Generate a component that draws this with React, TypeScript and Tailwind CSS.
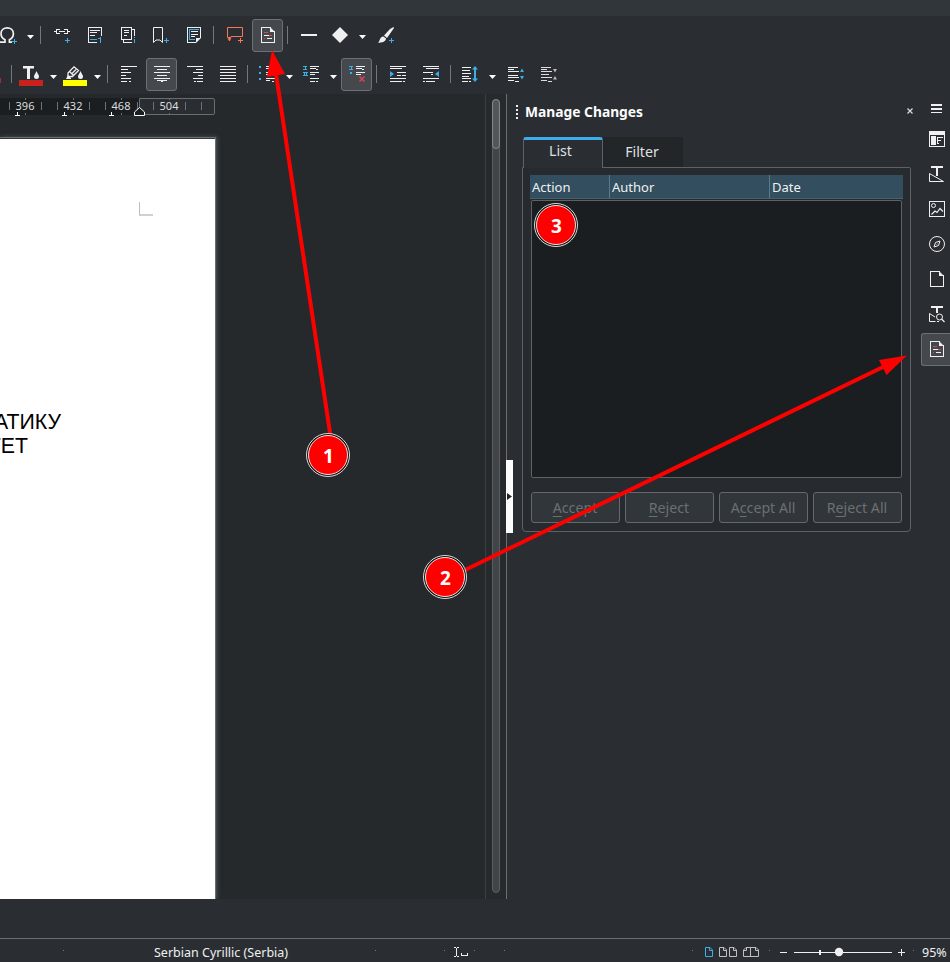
import React from "react";

type IconProps = { w?: number; h?: number; className?: string; children: React.ReactNode };

function Icon({ w = 16, h = 16, className = "", children }: IconProps) {
  return (
    <svg width={w} height={h} viewBox={`0 0 ${w} ${h}`} fill="none" className={"block shrink-0 overflow-visible " + className}>
      {children}
    </svg>
  );
}

const FG = "#eff0f1";
const BLUE = "#3daee9";
const RED = "#da4453";

function Px({ d, c = FG }: { d: string; c?: string }) {
  return <path d={d} stroke={c} shapeRendering="crispEdges" />;
}

const Sep = ({ className = "" }: { className?: string }) => (
  <div className={"h-[18px] w-px shrink-0 bg-[#75787b] " + className} />
);

const Caret = ({ className = "" }: { className?: string }) => (
  <Icon w={7} h={4} className={className}>
    <path d="M0 0H7L3.5 4Z" fill="#fcfcfc" />
  </Icon>
);

const Active = ({ className = "", children }: { className?: string; children: React.ReactNode }) => (
  <div className={"mt-px flex h-[33px] w-[31px] shrink-0 items-start rounded-[3px] border border-[#6e7174] bg-[#45484c] pt-[7px] " + className}>
    {children}
  </div>
);

const ChangesIcon = () => (
  <Icon w={14}>
    <Px d="M0 .5H10M.5 0V16M0 15.5H14M13.5 4V16" />
    <path d="M9 0L14 5H9Z" fill={FG} />
    <Px c={RED} d="M3 5.5H7M8 8.5H11M3 11.5H4" />
    <Px d="M3 8.5H8M6 11.5H11" />
  </Icon>
);

function InsertBar() {
  return (
    <div className="mb-px flex h-[38px] items-center overflow-hidden">
      <Icon w={17}>
        <path d="M-1 15.2H5V12.8C2.3 11.3 1 9.3 1 6.7C1 3.2 3.8.9 7.2.9S13.4 3.2 13.4 6.7C13.4 9.3 12.1 11.3 9.4 12.8V15.2H12" stroke={FG} strokeWidth="1.7" />
        <Px c={BLUE} d="M12 14.5H17M14.5 12V17" />
      </Icon>
      <Caret className="ml-[10px] mt-[4px]" />
      <Sep className="ml-[6px]" />
      <Icon className="ml-[13px]">
        <Px d="M0 4.5H3M2.5 2V7M2 2.5H6M2 6.5H6M6.5 4V5M5 4.5H11M10 2.5H14M10 6.5H14M13.5 2V7M13 4.5H16" />
        <Px c={BLUE} d="M11 13.5H16M13.5 11V16" />
      </Icon>
      <Icon w={14} className="ml-[18px]">
        <Px d="M13.5 9V0M14 .5H.5V15.5H9M2 3.5H12M2 5.5H9M2 8.5H7" />
        <Px c={BLUE} d="M2 12.5H9M10 11.5H12M12.5 10V16" />
      </Icon>
      <Icon className="ml-[19px]">
        <Px d="M.5 .5H10.5V12.5H.5ZM2.5 12V15.5H11M11 2.5H13.5V9M3 3.5H8M3 5.5H8M3 8.5H6" />
        <Px c={BLUE} d="M13.5 10V11M13.5 12V16" />
      </Icon>
      <Icon className="ml-[16px]">
        <path d="M.5 15.5V.5H9.5V15.5L7 13H3L.5 15.5Z" stroke={FG} />
        <Px c={BLUE} d="M11 13.5H16M13.5 11V16" />
      </Icon>
      <Icon w={14} className="ml-[18px]">
        <Px d="M9 15.5H.5V.5H13.5V11M4 4.5H11M4 7.5H11M4 9.5H8" />
        <Px c={BLUE} d="M2.5 13V2.5H12M2.5 12.5H8" />
        <path d="M9 16V11H14Z" fill={FG} />
      </Icon>
      <Sep className="ml-[12px]" />
      <Icon className="ml-[13px]">
        <path d="M.5 .5H15.5V9.5H4L2.5 14L.5 10Z" stroke="#f67750" />
        <path d="M1 10H4L2.5 14Z" fill="#f67750" />
        <Px c="#f67750" d="M11 13.5H16M13.5 11V16" />
      </Icon>
      <Active className="ml-[9px] pl-[8px]"><ChangesIcon /></Active>
      <Sep className="ml-[4px]" />
      <div className="ml-[13px] h-[2px] w-4 shrink-0 bg-[#eff0f1]" />
      <Icon className="ml-[15px]"><path d="M8 0L16 8L8 16L0 8Z" fill={FG} /></Icon>
      <Caret className="ml-[11px] mt-[4px]" />
      <Icon className="ml-[12px]">
        <path d="M15.5 0L16 1L9 11L6 8.5L12 2Z M5.5 9.5L8 11.5C8 15 3.5 15.5 0 16C2 14.5 1 10 5.5 9.5Z" fill={FG} />
        <Px c={BLUE} d="M11 13.5H16M13.5 11V16" />
      </Icon>
    </div>
  );
}

function FormatBar() {
  return (
    <div className="mb-px flex h-[38px] items-center overflow-hidden">
      <div className="mb-[10px] h-[5px] w-px shrink-0 self-end bg-[#a02c35]" />
      <Sep className="ml-[10px]" />
      <Icon w={24} h={20} className="ml-[7px] mt-[4px]">
        <path d="M4 0H15V2.5H11V13H8V2.5H4Z" fill={FG} />
        <path d="M17.5 5C18.5 8 20 8.5 20 10.5A2.5 2.5 0 0 1 15 10.5C15 8.5 16.5 8 17.5 5Z" fill={FG} />
        <path d="M0 14H24V20H0Z" fill="#c9211e" />
      </Icon>
      <Caret className="ml-[7px] mt-[6px]" />
      <Icon w={24} h={20} className="ml-[6px] mt-[4px]">
        <path d="M5 7L11 .8L15.5 4.5L9.5 10.5H5Z M7 6L10.5 9.5M8.5 8L13 3.5" stroke={FG} strokeWidth="1.3" />
        <path d="M3 13L5 9L8 12V13Z" fill={FG} />
        <path d="M17.5 5C18.5 8 20 8.5 20 10.5A2.5 2.5 0 0 1 15 10.5C15 8.5 16.5 8 17.5 5Z" fill={FG} />
        <path d="M0 14H24V20H0Z" fill="#ffff00" />
      </Icon>
      <Caret className="ml-[7px] mt-[6px]" />
      <Sep className="ml-[6px]" />
      <Icon className="ml-[13px]"><Px d="M0 .5H16M0 3.5H7M0 6.5H10M0 9.5H5M0 12.5H10M0 15.5H6M8 15.5H10" /></Icon>
      <Active className="ml-[9px] pl-[7px]">
        <Icon><Px d="M0 .5H16M3 3.5H13M0 6.5H16M3 9.5H13M0 12.5H16M3 14.5H13M7 15.5H9" /></Icon>
      </Active>
      <Icon className="ml-[10px]"><Px d="M0 .5H16M9 3.5H16M6 6.5H16M11 9.5H16M6 12.5H16M7 15.5H9M10 15.5H16" /></Icon>
      <Icon className="ml-[17px]"><Px d="M0 .5H16M0 3.5H16M0 6.5H16M0 9.5H16M0 12.5H16M0 15.5H16" /></Icon>
      <Sep className="ml-[11px]" />
      <Icon className="ml-[11px]">
        <path d="M0 0h2v2h-2zM0 6h2v2h-2zM0 12h2v2h-2z" fill={BLUE} />
        <Px d="M7 .5H16M7 2.5H13M7 6.5H16M7 8.5H12M7 12.5H16M7 14.5H11M13 15.5H15" />
      </Icon>
      <Caret className="ml-[11px] mt-[6px]" />
      <Icon className="ml-[10px]">
        <Px c={BLUE} d="M0 .5H4M2 0V4M0 3.5H4M0 6.5H5M1.5 6V10M3.5 6V10M0 9.5H5" />
        <Px d="M7 .5H16M7 2.5H13M13 3.5H15M7 6.5H16M7 8.5H12M7 12.5H16M7 15.5H12M13 15.5H15" />
      </Icon>
      <Caret className="ml-[11px] mt-[6px]" />
      <Active className="ml-[4px] pl-[7px]">
        <Icon>
          <Px c={BLUE} d="M0 .5H4M2 0V4M0 3.5H4" />
          <path d="M1 6h2v2h-2z" fill={BLUE} />
          <Px d="M7 .5H16M7 2.5H13M13 3.5H15M7 6.5H16M7 8.5H12" />
          <path d="M10.5 10.5L15.5 15.5M15.5 10.5L10.5 15.5" stroke={RED} strokeWidth="1.6" />
        </Icon>
      </Active>
      <Sep className="ml-[4px]" />
      <Icon className="ml-[13px]">
        <Px d="M0 .5H16M0 2.5H12M7 6.5H16M7 9.5H11M12 9.5H16M0 12.5H16M0 15.5H12M13 15.5H15" />
        <path d="M0 5L4 8L0 11Z" fill={BLUE} />
      </Icon>
      <Icon className="ml-[17px]">
        <Px d="M0 .5H16M3 2.5H16M0 6.5H10M8 8.5H10M0 12.5H16M3 15.5H12M0 15.5H2" />
        <path d="M16 5L12 8L16 11Z" fill={BLUE} />
      </Icon>
      <Sep className="ml-[11px]" />
      <Icon className="ml-[11px]">
        <Px d="M0 1.5H9M0 4.5H8M0 7.5H9M0 10.5H7M0 12.5H9M0 15.5H6M7 15.5H9" />
        <path d="M13 0L16 3.5H14V12.5H16L13 16L10 12.5H12V3.5H10Z" fill={BLUE} />
      </Icon>
      <Caret className="ml-[11px] mt-[6px]" />
      <Icon className="ml-[12px]">
        <Px d="M0 1.5H10M0 3.5H6M0 5.5H11M0 9.5H10M0 11.5H11M0 14.5H6M7 15.5H11" />
        <path d="M14 2.5L16 6H12ZM14 13.5L16 10H12Z" fill={BLUE} />
      </Icon>
      <Icon className="ml-[17px]">
        <Px d="M0 1.5H10M0 3.5H6M0 5.5H11M0 8.5H8M0 11.5H11M0 14.5H6M7 15.5H11" c="#dcdddf" />
        <path d="M14 6.5L16 3H12ZM14 10L16 13.5H12Z" fill="#b5b7b9" />
      </Icon>
    </div>
  );
}

function Ruler() {
  return (
    <div className="relative mt-[4px] flex h-[17px] w-[215px]">
      <div className="h-[17px] w-[139px] bg-[#1b1e20]" />
      <div className="h-[17px] w-[76px] rounded-r-[2px] border border-[#6b6e71] bg-[#2a2e32]" />
      <svg className="absolute left-0 top-0 overflow-visible" width="215" height="18" shapeRendering="crispEdges" fill="none">
        <path d="M9.5 4V12M41.5 4V12M57.5 4V12M89.5 4V12M105.5 4V12M137.5 4V12M153.5 4V12M185.5 4V12M201.5 4V12M25.5 0V2M25.5 15V17M73.5 0V2M73.5 15V17M121.5 0V2M121.5 15V17M169.5 0V2M169.5 15V17" stroke="#6f7275" />
        <path d="M15 17.5H20M17.5 14V18M62 17.5H67M64.5 14V18M109 17.5H114M111.5 14V18" stroke="#fcfcfc" />
        <path d="M134.5 17.5V14L139.5 9.5L144.5 14V17.5Z" fill="#1b1e20" stroke="#fcfcfc" shapeRendering="auto" />
      </svg>
      <div className="absolute -top-px left-px flex text-[11px] leading-[17px] text-[#dcdddf]">
        {["396", "432", "468", "504"].map((n) => (
          <span key={n} className="w-12 text-center">{n}</span>
        ))}
      </div>
    </div>
  );
}

function DocumentArea() {
  return (
    <div className="h-full w-[485px] shrink-0 overflow-hidden bg-[#25292b]">
      <Ruler />
      <div className="mt-[22px] h-[762px] w-[216px] border-r border-t border-[#6b6e71] bg-white shadow-[1px_0_4px_#50565a]">
        <div className="h-px bg-[#33373a]" />
        <div className="ml-[139px] mt-[63px] h-[14px] w-[14px] border-b-2 border-l border-[#d0d0d0] border-l-[#bdbdbd]" />
        <div className="mt-[194px] flex w-[61px] flex-col font-['Liberation_Sans',Arial,sans-serif] text-[21.3px] leading-6 text-black">
          <span className="flex justify-end whitespace-nowrap">АТИКУ</span>
          <span className="mr-[33px] flex justify-end whitespace-nowrap">ТЕТ</span>
        </div>
      </div>
    </div>
  );
}

function ListButton({ before, mnemonic, after }: { before: string; mnemonic: string; after: string }) {
  return (
    <button className="flex h-[31px] w-[89px] items-center justify-center whitespace-pre rounded-[3px] border border-[#66696c] bg-[#31363a] pr-px text-[14.2px] text-[#6c6f73]">
      {before}
      <span className="underline decoration-1 underline-offset-[3px]">{mnemonic}</span>
      {after}
    </button>
  );
}

function ChangesPanel() {
  return (
    <div className="w-[398px] shrink-0">
      <div className="flex h-[43px] items-center">
        <Icon w={2} h={14} className="ml-[3px] mt-[-7px]">
          <path d="M0 0h2v2h-2zM0 4h2v2h-2zM0 8h2v2h-2zM0 12h2v2h-2z" fill={FG} />
        </Icon>
        <h2 className="mb-[7px] ml-[7px] text-[13.8px] font-bold leading-5 text-[#fcfcfc]">Manage Changes</h2>
        <Icon w={6} h={6} className="ml-auto mr-[-2px] mt-[-9px]">
          <path d="M.5 .5L5.5 5.5M5.5 .5L.5 5.5" stroke="#dcdddf" strokeWidth="1.2" />
        </Icon>
      </div>
      <div className="relative z-10 -mb-px ml-[10px] flex h-[31px] text-[14.2px] text-[#dfe0e1]">
        <div className="flex h-[31px] w-[80px] items-center justify-center rounded-t-[3px] border-x border-t-[3px] border-x-[#5f6265] border-t-[#3daee9] bg-[#2a2e32] pb-[7px] pr-[5px]">List</div>
        <div className="flex h-[30px] w-[80px] items-center justify-center bg-[#232629] pr-[2px]">Filter</div>
      </div>
      <div className="ml-[9px] h-[365px] w-[389px] rounded-b-[4px] rounded-tr-[2px] border border-[#5f6265] bg-[#272a2e] px-[7px] pt-[7px]">
        <div className="flex h-6 w-[373px] border-b border-[#45626f] bg-[#334e5e] text-[13px] leading-6 text-[#eff0f1]">
          <div className="w-[80px] border-r border-[#5d7986] pl-[2px]">Action</div>
          <div className="w-[160px] border-r border-[#5d7986] pl-[2px]">Author</div>
          <div className="pl-[2px]">Date</div>
        </div>
        <div className="ml-px mt-px h-[278px] w-[371px] rounded-[2px] border border-[#5f6265] bg-[#1b1e20]" />
        <div className="ml-px mt-[14px] flex gap-[5px]">
          <ListButton before="" mnemonic="A" after="ccept" />
          <ListButton before="" mnemonic="R" after="eject" />
          <ListButton before="A" mnemonic="c" after="cept All" />
          <ListButton before="R" mnemonic="e" after="ject All" />
        </div>
      </div>
    </div>
  );
}

function SidebarTabs() {
  return (
    <div className="ml-auto flex w-[29px] flex-col pl-[8px]">
      <Icon w={11} h={10} className="ml-[2px] mt-[10px]">
        <path d="M0 0h11v2h-11zM0 4h11v2h-11zM0 8h11v1h-11z" fill={FG} />
      </Icon>
      <Icon className="mt-[17px]">
        <path d="M0 0H16V4H0ZM2 5H7V14H2Z" fill={FG} />
        <Px d="M.5 4V15.5H15.5V4M8 6.5H14M8 9.5H12M8 12.5H10M8.5 6V13" />
      </Icon>
      <Icon className="mt-[19px]">
        <path d="M2 0H14V2H9V10H7V2H2Z" fill={FG} />
        <path d="M.5 7.5V15.5H14.5Z" stroke={FG} />
      </Icon>
      <Icon className="mt-[19px]">
        <Px d="M.5 .5H15.5V15.5H.5Z" />
        <path d="M2.5 13.5L6 10L8 11.5L11 7.5L14 10.5" stroke={FG} strokeWidth="1.2" />
        <circle cx="4.5" cy="4.5" r="2" stroke={FG} />
      </Icon>
      <Icon className="mt-[19px]">
        <circle cx="8" cy="8" r="7.5" stroke={FG} />
        <path d="M11 5L9.5 9.5L5 11L6.5 6.5Z" stroke={FG} />
        <path d="M9.5 6.5L8 8.5L6.5 9.5Z" fill={FG} />
      </Icon>
      <Icon w={14} className="ml-px mt-[19px]">
        <Px d="M0 .5H10M.5 0V16M0 15.5H14M13.5 4V16" />
        <path d="M9 0L14 5H9Z" fill={FG} />
      </Icon>
      <Icon className="mt-[19px]">
        <path d="M2 0H14V2H9V7H7V2H2Z" fill={FG} />
        <path d="M6.5 15.5H.5V7.5L6 11M8 15.5H10" stroke={FG} />
        <circle cx="10.500" cy="11" r="3" stroke={FG} />
        <path d="M12.5 13L15.5 16" stroke={FG} strokeWidth="1.3" />
      </Icon>
      <div className="-ml-[8px] mt-[11px] flex h-[33px] w-[29px] shrink-0 items-start rounded-l-[3px] border-y border-l border-[#6e7174] bg-[#45484c] pl-[8px] pt-[7px]">
        <ChangesIcon />
      </div>
    </div>
  );
}

function Workspace() {
  return (
    <div className="flex h-[805px]">
      <DocumentArea />
      <div className="w-[22px] shrink-0 border-x border-l-[#3b3f42] border-r-[#6b6e71] bg-[#272a2d] pl-[6px] pt-[5px]">
        <div className="h-[794px] w-[8px] rounded-full border border-[#5a5d60] bg-[#424548]">
          <div className="-ml-px -mt-px h-[50px] w-[8px] rounded-full border border-[#85888a] bg-[#54575a]" />
        </div>
      </div>
      <div className="-ml-px mt-[366px] flex h-[73px] w-[7px] shrink-0 items-center bg-[#fcfcfc]">
        <Icon w={5} h={7} className="ml-px"><path d="M0 0L5 3.5L0 7Z" fill="#232629" /></Icon>
      </div>
      <ChangesPanel />
      <SidebarTabs />
    </div>
  );
}

const Dot = ({ className }: { className: string }) => (
  <div className={"mb-[3px] h-px w-px shrink-0 bg-[#777a7d] " + className} />
);

function StatusBar() {
  return (
    <div className="flex h-6 items-center overflow-hidden border-t border-[#6b6e71] pt-[3px] text-[12.5px] leading-[18px] text-[#eff0f1]">
      <Dot className="ml-[63px]" />
      <span className="ml-[90px] mt-[2px] w-[136px] shrink-0 whitespace-nowrap">Serbian Cyrillic (Serbia)</span>
      <Dot className="ml-[85px]" />
      <Dot className="ml-[68px]" />
      <Icon w={14} h={10} className="ml-[9px]">
        <Px d="M0 .5H2M3 .5H5M2.5 1V9M0 9.5H2M3 9.5H5M7.5 6V8.5H13.5V6" />
      </Icon>
      <Dot className="ml-[6px]" />
      <Dot className="ml-[29px]" />
      <Dot className="ml-[187px]" />
      <Icon w={8} h={10} className="ml-[12px]">
        <path d="M.5 .5H5L7.5 3V9.5H.5ZM4.5 .5V3.5H7.5" stroke={BLUE} />
      </Icon>
      <Icon w={18} h={10} className="ml-[6px]">
        <path d="M.5 .5H5L7.5 3V9.5H.5ZM4.5 .5V3.5H7.5M10.5 .5H15L17.5 3V9.5H10.5ZM14.5 .5V3.5H17.5" stroke="#bdbfc0" />
      </Icon>
      <Icon w={16} h={10} className="ml-[6px]">
        <path d="M8 .5H3L.5 3V9.5H15.5V3L13 .5ZM7.5 .5V9.5M3.5 .5V3.5H.5M12.5 .5V3.5H15.5" stroke="#bdbfc0" />
      </Icon>
      <Dot className="ml-[10px]" />
      <div className="ml-[10px] h-px w-[7px] shrink-0 bg-[#eff0f1]" />
      <Icon w={98} h={8} className="ml-[7px]">
        <path d="M0 4H98V5H0Z M25 2H27V7H25Z" fill={FG} />
        <circle cx="45" cy="4" r="4.2" fill={FG} />
      </Icon>
      <Icon w={7} h={7} className="ml-[6px]"><Px d="M0 3.5H7M3.5 0V7" /></Icon>
      <Dot className="ml-[8px]" />
      <span className="ml-[8px] mt-[2px]">95%</span>
    </div>
  );
}

function Marker({ n, className }: { n: number; className: string }) {
  return (
    <div className={"absolute flex h-[44px] w-[44px] items-center justify-center rounded-full border border-[#dcdcdc] bg-[#101010] " + className}>
      <div className="flex h-[40px] w-[40px] items-center justify-center rounded-full border border-[#f4dede] bg-[#ff0000] pl-px pt-[2px] text-[19px] font-bold leading-none text-white">{n}</div>
    </div>
  );
}

export default function App() {
  return (
    <div className="relative h-[962px] w-[950px] overflow-hidden bg-[#2a2e32] font-['Noto_Sans',sans-serif]">
      <div className="h-4 bg-[#31363b]" />
      <InsertBar />
      <FormatBar />
      <Workspace />
      <div className="h-[39px]" />
      <StatusBar />
      <svg className="absolute left-0 top-0" width="950" height="962" fill="#ff0000">
        <path d="M330.5 436L276 74M465 570L884 366.5" stroke="#ff0000" strokeWidth="4" />
        <path d="M272 50L267 77L285 74ZM907 355.5L879 360L886.5 375Z" />
      </svg>
      <Marker n={1} className="left-[306px] top-[433px]" />
      <Marker n={2} className="left-[423px] top-[555px]" />
      <Marker n={3} className="left-[534px] top-[203px]" />
    </div>
  );
}
